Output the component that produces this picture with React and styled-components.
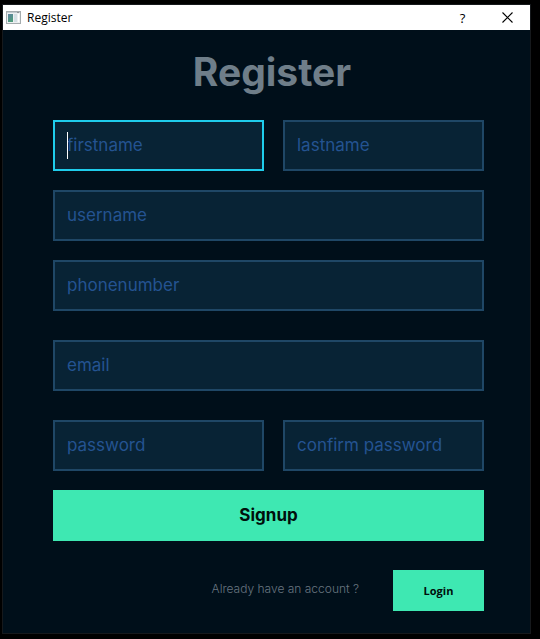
import React from "react";
import styled, { createGlobalStyle } from "styled-components";

const GlobalStyle = createGlobalStyle`
  * { box-sizing: border-box; }
  body {
    margin: 0;
    background: #000;
    font-family: Inter, "Open Sans", sans-serif;
  }
`;

const Desktop = styled.div`
  display: flex;
  min-height: 100vh;
  padding: 4px 9px 5px 2px;
`;

const Window = styled.main`
  flex: 1;
  display: flex;
  flex-direction: column;
  border: 1px solid #16191c;
  background: #000f1a;
`;

const TitleBar = styled.header`
  display: flex;
  align-items: center;
  height: 25px;
  padding-left: 3px;
  background: #fff;
  color: #000;
`;

const WindowTitle = styled.span`
  flex: 1;
  padding-left: 6px;
  font: 12px/16px "Open Sans", sans-serif;
`;

const TitleButton = styled.button`
  display: flex;
  align-items: center;
  justify-content: center;
  width: 45px;
  height: 25px;
  padding: 0;
  border: 0;
  background: transparent;
  color: #000;
  font: 500 13px/16px "Open Sans", sans-serif;
`;

const Content = styled.div`
  display: flex;
  flex-direction: column;
  padding: 14px 46px 22px 50px;
`;

const Heading = styled.h1`
  margin: 0 0 20px;
  padding-left: 7px;
  color: #6f7e89;
  font-size: 39px;
  line-height: 56px;
  font-weight: 700;
  text-align: center;
`;

const Form = styled.form`
  display: flex;
  flex-direction: column;
`;

const Row = styled.div`
  display: grid;
  grid-template-columns: ${(p) => (p.$split ? "211fr 201fr" : "1fr")};
  gap: 19px;
  margin-bottom: ${(p) => (p.$loose ? 29 : 19)}px;
`;

const Field = styled.label`
  position: relative;
  display: block;
`;

const Input = styled.input`
  display: block;
  width: 100%;
  height: 51px;
  padding: 0 12px 2px;
  border: 2px solid ${(p) => (p.$active ? "#1fcdec" : "#1f4766")};
  border-radius: 0;
  outline: 0;
  background: #082335;
  color: #fff;
  caret-color: transparent;
  font-family: inherit;
  font-size: 17px;
  font-weight: 400;

  &::placeholder {
    color: #245391;
    opacity: 1;
  }
`;

const Caret = styled.span`
  position: absolute;
  top: 12px;
  left: 14px;
  width: 1px;
  height: 27px;
  background: #fff;
`;

const ActionButton = styled.button`
  border: 0;
  background: #3ee8b2;
  color: #000f0c;
`;

const SignupButton = styled(ActionButton)`
  height: 51px;
  padding: 0 0 2px;
  font: 700 17px/24px Inter, sans-serif;
`;

const LoginButton = styled(ActionButton)`
  width: 91px;
  height: 41px;
  font: 700 11px/16px "Open Sans", sans-serif;
`;

const Footer = styled.footer`
  display: flex;
  align-items: center;
  justify-content: flex-end;
  gap: 34px;
  margin-top: 29px;
`;

const Prompt = styled.span`
  padding-bottom: 3px;
  color: #687580;
  font-size: 12px;
  line-height: 16px;
  font-weight: 300;
`;

function AppIcon() {
  return (
    <svg width="15" height="13" viewBox="0 0 15 13" aria-hidden="true">
      <defs>
        <linearGradient id="pane" x1="0" y1="0" x2="0.4" y2="1">
          <stop offset="0" stopColor="#5d83a0" />
          <stop offset="1" stopColor="#4e9c7c" />
        </linearGradient>
      </defs>
      <rect x="0.5" y="0.5" width="14" height="12" fill="#edf0f1" stroke="#a5acae" />
      <path d="M1 1.5H14" stroke="#c3cbd0" />
      <path d="M11 1.5H13" stroke="#8f9295" />
      <rect x="2" y="3" width="5" height="8" fill="url(#pane)" />
      <rect x="8" y="3" width="3" height="8" fill="#d5e0e5" />
      <rect x="12" y="3" width="1" height="8" fill="#fff" />
    </svg>
  );
}

function CloseIcon() {
  return (
    <svg width="11" height="11" viewBox="0 0 11 11" aria-hidden="true">
      <path d="M0.5 0.5L10.5 10.5M10.5 0.5L0.5 10.5" stroke="#000" strokeWidth="1.1" />
    </svg>
  );
}

function TextField({ name, type = "text", active = false }) {
  return (
    <Field>
      <Input name={name} type={type} placeholder={name} aria-label={name} $active={active} />
      {active && <Caret />}
    </Field>
  );
}

export default function App() {
  return (
    <>
      <GlobalStyle />
      <Desktop>
        <Window>
          <TitleBar>
            <AppIcon />
            <WindowTitle>Register</WindowTitle>
            <TitleButton type="button" aria-label="Help">?</TitleButton>
            <TitleButton type="button" aria-label="Close"><CloseIcon /></TitleButton>
          </TitleBar>
          <Content>
            <Heading>Register</Heading>
            <Form onSubmit={(e) => e.preventDefault()}>
              <Row $split>
                <TextField name="firstname" active />
                <TextField name="lastname" />
              </Row>
              <Row><TextField name="username" /></Row>
              <Row $loose><TextField name="phonenumber" type="tel" /></Row>
              <Row $loose><TextField name="email" type="email" /></Row>
              <Row $split>
                <TextField name="password" type="password" />
                <TextField name="confirm password" type="password" />
              </Row>
              <SignupButton type="submit">Signup</SignupButton>
            </Form>
            <Footer>
              <Prompt>Already have an account ?</Prompt>
              <LoginButton type="button">Login</LoginButton>
            </Footer>
          </Content>
        </Window>
      </Desktop>
    </>
  );
}
